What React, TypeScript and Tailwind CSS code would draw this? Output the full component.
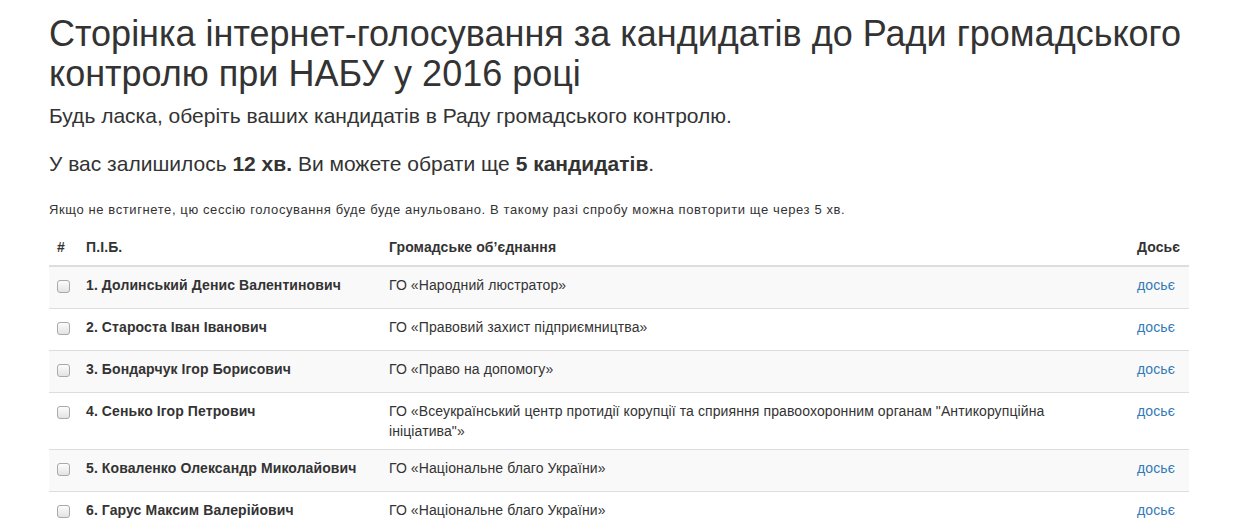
import React from 'react'

const candidates = [
  { n: '1. Долинський Денис Валентинович', org: 'ГО «Народний люстратор»' },
  { n: '2. Староста Іван Іванович', org: 'ГО «Правовий захист підприємництва»' },
  { n: '3. Бондарчук Ігор Борисович', org: 'ГО «Право на допомогу»' },
  {
    n: '4. Сенько Ігор Петрович',
    org: 'ГО «Всеукраїнський центр протидії корупції та сприяння правоохоронним органам "Антикорупційна ініціатива"»',
  },
  { n: '5. Коваленко Олександр Миколайович', org: 'ГО «Національне благо України»' },
  { n: '6. Гарус Максим Валерійович', org: 'ГО «Національне благо України»' },
]

export default function App() {
  return (
    <div className="min-h-screen bg-white text-[#333] text-[14px] leading-5 font-['Liberation_Sans',Arial,sans-serif]">
      <div className="ml-[49px] w-[1140px]">
        <h1 className="pt-[14px] mb-[8px] text-[36px] leading-[39.6px] font-medium">
          Сторінка інтернет-голосування за кандидатів до Ради громадського контролю при НАБУ у 2016 році
        </h1>
        <p className="text-[21px] leading-[29.4px] font-light mb-[18px]">
          Будь ласка, оберіть ваших кандидатів в Раду громадського контролю.
        </p>
        <p className="text-[21px] leading-[29.4px] font-light mb-[22px]">
          У вас залишилось <b className="font-bold">12 хв.</b> Ви можете обрати ще{' '}
          <b className="font-bold">5 кандидатів</b>.
        </p>
        <p className="text-[13px] leading-5 tracking-[0.6px] mb-[9px]">
          Якщо не встигнете, цю сессію голосування буде буде анульовано. В такому разі спробу можна повторити ще через 5 хв.
        </p>

        <table className="w-full border-collapse tracking-[0.1px]">
          <thead>
            <tr className="border-b-2 border-[#ddd] text-left">
              <th className="w-[29px] p-2 font-bold">#</th>
              <th className="w-[303px] p-2 font-bold">П.І.Б.</th>
              <th className="p-2 font-bold">Громадське об’єднання</th>
              <th className="w-[60px] p-2 font-bold">Досьє</th>
            </tr>
          </thead>
          <tbody>
            {candidates.map((c, i) => (
              <tr key={i} className={`border-t border-[#ddd] align-top ${i % 2 === 0 ? 'bg-[#f9f9f9]' : ''}`}>
                <td className="p-2">
                  <div className="h-[25px] pt-[5px]">
                    <span className="block w-[13px] h-[13px] rounded-[3px] border border-[#a9a9a9] bg-gradient-to-b from-[#fcfcfc] to-[#e3e3e3]" />
                  </div>
                </td>
                <td className="p-2 font-bold">{c.n}</td>
                <td className="p-2">{c.org}</td>
                <td className="p-2">
                  <a href="#" className="text-[#337ab7]">досьє</a>
                </td>
              </tr>
            ))}
          </tbody>
        </table>
      </div>
    </div>
  )
}
